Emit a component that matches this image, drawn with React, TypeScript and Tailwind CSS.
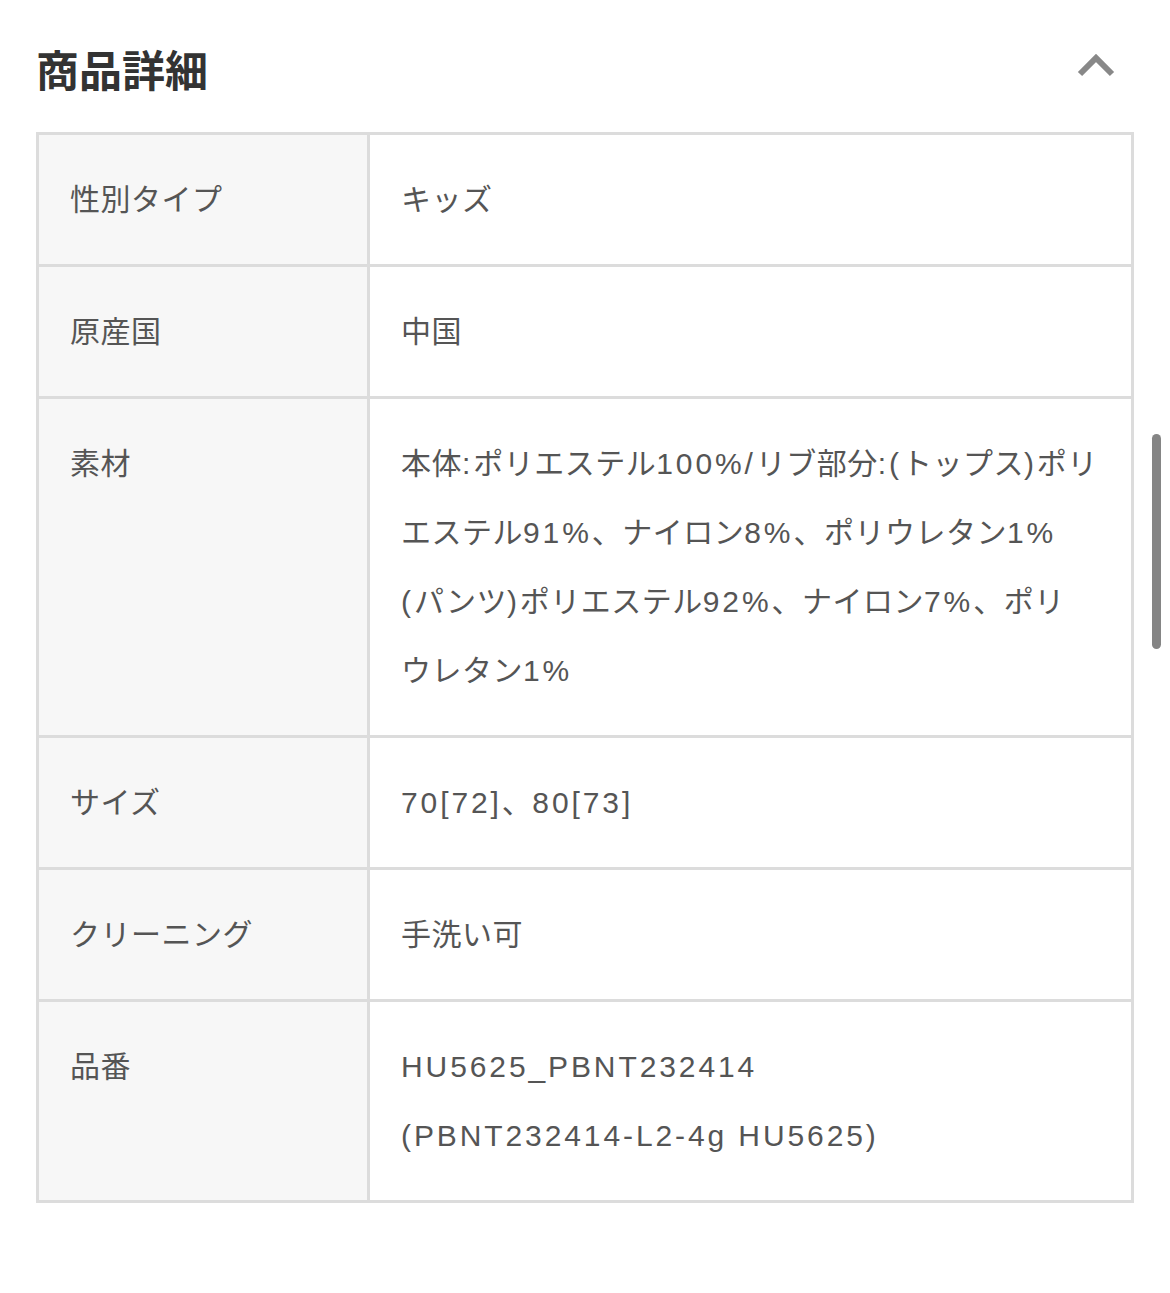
import React from 'react';

const rows: { label: string; lines: string[] }[] = [
  { label: '性別タイプ', lines: ['キッズ'] },
  { label: '原産国', lines: ['中国'] },
  {
    label: '素材',
    lines: [
      '本体:ポリエステル100%/リブ部分:(トップス)ポリ',
      'エステル91%、ナイロン8%、ポリウレタン1%',
      '(パンツ)ポリエステル92%、ナイロン7%、ポリ',
      'ウレタン1%',
    ],
  },
  { label: 'サイズ', lines: ['70[72]、80[73]'] },
  { label: 'クリーニング', lines: ['手洗い可'] },
  { label: '品番', lines: ['HU5625_PBNT232414', '(PBNT232414-L2-4g HU5625)'] },
];

// latin runs are set wider to match the reference font
function Line({ text }: { text: string }) {
  const parts = text.split(/([A-Za-z0-9%:/()[\]_\- ]+)/);
  return (
    <div>
      {parts.map((p, i) =>
        /[A-Za-z0-9%]/.test(p) || /^[:/()[\]_\- ]+$/.test(p) ? (
          <span key={i} className="tracking-[2.9px]">
            {p}
          </span>
        ) : (
          <span key={i}>{p}</span>
        )
      )}
    </div>
  );
}

export default function App() {
  return (
    <div
      className="relative min-h-[1293px] bg-white px-[36px]"
      style={{ fontFamily: '"Liberation Sans", "Noto Sans CJK JP", sans-serif' }}
    >
      {/* header */}
      <div className="flex h-[132px] items-center justify-between pt-[4px]">
        <h2
          className="text-[43px] font-bold leading-none text-[#333]"
          style={{ fontFamily: '"Noto Sans CJK JP", sans-serif' }}
        >
          商品詳細
        </h2>
        <svg width="40" height="26" viewBox="0 0 40 26" className="mr-[18px] -mt-[6px]">
          <path d="M4 22 L20 6 L36 22" fill="none" stroke="#888" strokeWidth="6" strokeLinejoin="miter" />
        </svg>
      </div>

      {/* table */}
      <div className="border-[3px] border-[#dcdcdc]">
        {rows.map((r, i) => (
          <div key={r.label} className={'flex ' + (i > 0 ? 'border-t-[3px] border-[#dcdcdc]' : '')}>
            <div className="w-[331px] shrink-0 border-r-[3px] border-[#dcdcdc] bg-[#f7f7f7] py-[30px] pl-[31px] text-[30px] leading-[69px] tracking-[0.5px] text-[#555]">
              {r.label}
            </div>
            <div className="flex-1 py-[30px] pl-[31px] text-[30px] leading-[69px] tracking-[0.5px] text-[#555] whitespace-nowrap">
              {r.lines.map((l) => (
                <Line key={l} text={l} />
              ))}
            </div>
          </div>
        ))}
      </div>

      {/* overlay scrollbar */}
      <div className="absolute left-[1152px] top-[434px] h-[215px] w-[9px] rounded-full bg-[#858585]" />
    </div>
  );
}
